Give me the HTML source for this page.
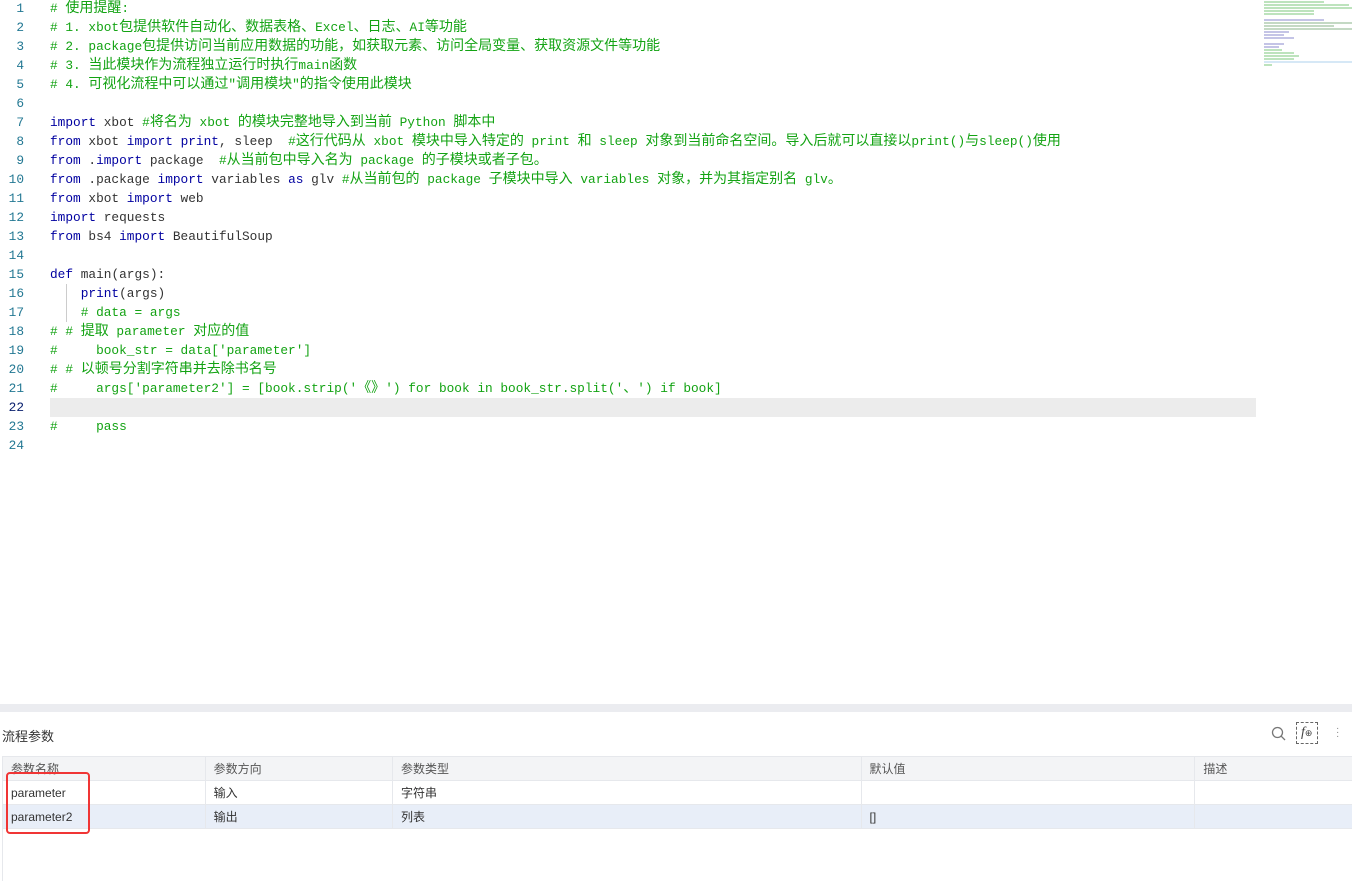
<!DOCTYPE html>
<html><head><meta charset="utf-8"><style>
body{margin:0;width:1352px;height:881px;overflow:hidden;background:#fff;font-family:"Liberation Sans","Noto Sans CJK SC",sans-serif;position:relative}
.code{position:absolute;left:0;top:-1px;width:1352px;font-family:"Liberation Mono","Noto Sans CJK SC",monospace;font-size:12.8px;color:#333}
.code i{font-style:normal;font-size:14px}
.ln{height:19px;line-height:19px;white-space:pre;position:relative}
.ln .n{position:absolute;left:0;width:24px;text-align:right;color:#237893}
.ln .t{position:absolute;left:50px}
.k{color:#0000a0}.c{color:#13a313}
.hl{position:absolute;left:50px;top:398px;width:1206px;height:19px;background:#ececec}
.guide{position:absolute;left:66px;top:284px;width:1px;height:38px;background:#ccc}
.strip{position:absolute;left:0;top:704px;width:1352px;height:8px;background:#ebecf0}
.title{position:absolute;left:2px;top:726px;font-size:13px;color:#333}
table{position:absolute;left:2px;top:756px;border-collapse:collapse;font-size:12px;color:#333}
td{height:23px;padding:0 0 0 8px;border:1px solid #e6e8ec;vertical-align:middle}
tr.h td{background:#f3f4f6;color:#555}
tr.s td{background:#e8eef8}
.red{position:absolute;left:6px;top:772px;width:80px;height:58px;border:2.5px solid #f03535;border-radius:4px}
.mini{position:absolute;left:1264px;top:1px;width:90px}
.mini div{height:2px;margin-bottom:1px}
</style></head><body>
<div class="hl"></div><div class="guide"></div>
<div class="code">
<div class="ln"><span class="n">1</span><span class="t c"># <i>使用提醒</i>:</span></div>
<div class="ln"><span class="n">2</span><span class="t c"># 1. xbot<i>包提供软件自动化、数据表格、</i>Excel<i>、日志、</i>AI<i>等功能</i></span></div>
<div class="ln"><span class="n">3</span><span class="t c"># 2. package<i>包提供访问当前应用数据的功能，如获取元素、访问全局变量、获取资源文件等功能</i></span></div>
<div class="ln"><span class="n">4</span><span class="t c"># 3. <i>当此模块作为流程独立运行时执行</i>main<i>函数</i></span></div>
<div class="ln"><span class="n">5</span><span class="t c"># 4. <i>可视化流程中可以通过</i>"<i>调用模块</i>"<i>的指令使用此模块</i></span></div>
<div class="ln"><span class="n">6</span><span class="t"></span></div>
<div class="ln"><span class="n">7</span><span class="t"><span class="k">import</span> xbot <span class="c">#<i>将名为</i> xbot <i>的模块完整地导入到当前</i> Python <i>脚本中</i></span></span></div>
<div class="ln"><span class="n">8</span><span class="t"><span class="k">from</span> xbot <span class="k">import</span> <span class="k">print</span>, sleep  <span class="c">#<i>这行代码从</i> xbot <i>模块中导入特定的</i> print <i>和</i> sleep <i>对象到当前命名空间。导入后就可以直接以</i>print()<i>与</i>sleep()<i>使用</i></span></span></div>
<div class="ln"><span class="n">9</span><span class="t"><span class="k">from</span> .<span class="k">import</span> package  <span class="c">#<i>从当前包中导入名为</i> package <i>的子模块或者子包。</i></span></span></div>
<div class="ln"><span class="n">10</span><span class="t"><span class="k">from</span> .package <span class="k">import</span> variables <span class="k">as</span> glv <span class="c">#<i>从当前包的</i> package <i>子模块中导入</i> variables <i>对象，并为其指定别名</i> glv<i>。</i></span></span></div>
<div class="ln"><span class="n">11</span><span class="t"><span class="k">from</span> xbot <span class="k">import</span> web</span></div>
<div class="ln"><span class="n">12</span><span class="t"><span class="k">import</span> requests</span></div>
<div class="ln"><span class="n">13</span><span class="t"><span class="k">from</span> bs4 <span class="k">import</span> BeautifulSoup</span></div>
<div class="ln"><span class="n">14</span><span class="t"></span></div>
<div class="ln"><span class="n">15</span><span class="t"><span class="k">def</span> main(args):</span></div>
<div class="ln"><span class="n">16</span><span class="t">    <span class="k">print</span>(args)</span></div>
<div class="ln"><span class="n">17</span><span class="t">    <span class="c"># data = args</span></span></div>
<div class="ln"><span class="n">18</span><span class="t c"># # <i>提取</i> parameter <i>对应的值</i></span></div>
<div class="ln"><span class="n">19</span><span class="t c">#     book_str = data['parameter']</span></div>
<div class="ln"><span class="n">20</span><span class="t c"># # <i>以顿号分割字符串并去除书名号</i></span></div>
<div class="ln"><span class="n">21</span><span class="t c">#     args['parameter2'] = [book.strip('<i>《》</i>') for book in book_str.split('<i>、</i>') if book]</span></div>
<div class="ln"><span class="n" style="color:#0b216f">22</span><span class="t"></span></div>
<div class="ln"><span class="n">23</span><span class="t c">#     pass</span></div>
<div class="ln"><span class="n">24</span><span class="t"></span></div>
</div>
<div class="mini">
<div style="width:60px;background:#bde3bd"></div><div style="width:85px;background:#bde3bd"></div><div style="width:88px;background:#bde3bd"></div><div style="width:50px;background:#bde3bd"></div><div style="width:50px;background:#bde3bd"></div><div style="width:0"></div>
<div style="width:60px;background:#c4c4e6"></div><div style="width:88px;background:#c4d9c4"></div><div style="width:70px;background:#c4d9c4"></div><div style="width:88px;background:#c4d9c4"></div><div style="width:25px;background:#c4c4e6"></div><div style="width:20px;background:#c4c4e6"></div><div style="width:30px;background:#c4c4e6"></div><div style="width:0"></div>
<div style="width:20px;background:#c4c4e6"></div><div style="width:15px;background:#c4c4e6"></div><div style="width:18px;background:#bde3bd"></div><div style="width:30px;background:#bde3bd"></div><div style="width:35px;background:#bde3bd"></div><div style="width:30px;background:#bde3bd"></div><div style="width:88px;background:#d6e8f6"></div><div style="width:8px;background:#bde3bd"></div>
</div>
<div class="strip"></div>
<div class="title">流程参数</div>
<svg style="position:absolute;left:1271px;top:726px" width="16" height="16" viewBox="0 0 16 16"><circle cx="6.5" cy="6.5" r="5" fill="none" stroke="#777" stroke-width="1.3"/><path d="M10.2 10.2L14 14" stroke="#777" stroke-width="1.3"/></svg>
<div style="position:absolute;left:1296px;top:722px;width:22px;height:22px;border:1px dashed #666;box-sizing:border-box;font-family:'Liberation Serif',serif;font-style:italic;font-size:14px;color:#444;line-height:20px;padding-left:4px">f<span style="font-style:normal;font-size:9px">⊕</span></div>
<div style="position:absolute;left:1336px;top:727px;width:2px;color:#888;font-size:10px;line-height:4px">·<br>·<br>·</div>
<table>
<tr class="h"><td style="width:195px">参数名称</td><td style="width:180px">参数方向</td><td style="width:464px">参数类型</td><td style="width:328px">默认值</td><td style="width:150px;border-right:none">描述</td></tr>
<tr><td>parameter</td><td>输入</td><td>字符串</td><td></td><td style="border-right:none"></td></tr>
<tr class="s"><td>parameter2</td><td>输出</td><td>列表</td><td>[]</td><td style="border-right:none"></td></tr>
</table>
<div style="position:absolute;left:2px;top:827px;width:1px;height:54px;background:#e6e8ec"></div>
<div class="red"></div>
</body></html>
